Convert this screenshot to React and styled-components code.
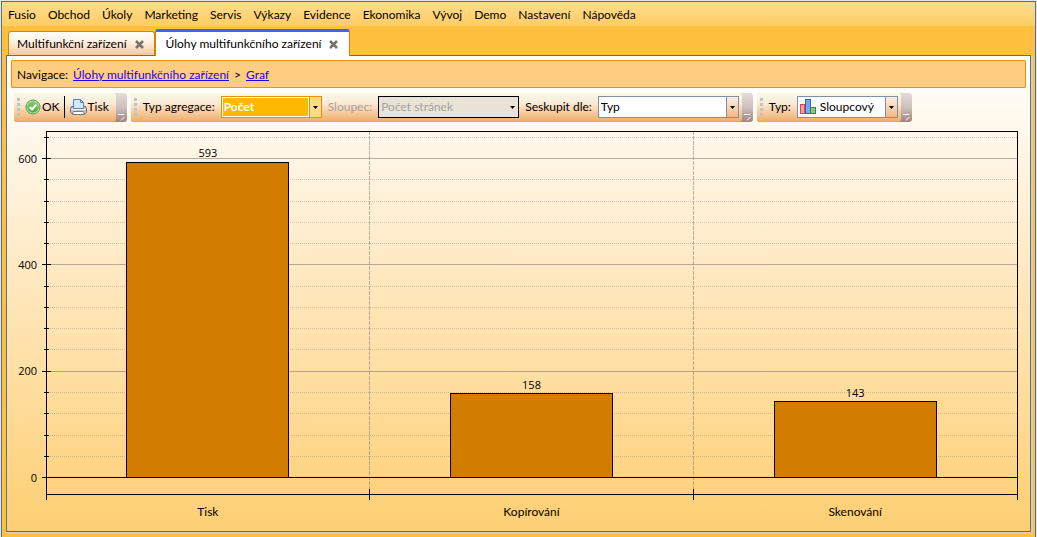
import { useState } from 'react';
import styled, { createGlobalStyle, css } from 'styled-components';

const MENU = [
  'Fusio',
  'Obchod',
  'Úkoly',
  'Marketing',
  'Servis',
  'Výkazy',
  'Evidence',
  'Ekonomika',
  'Vývoj',
  'Demo',
  'Nastavení',
  'Nápověda',
];

const TABS = [
  { id: 'devices', title: 'Multifunkční zařízení' },
  { id: 'jobs', title: 'Úlohy multifunkčního zařízení' },
];

const DATA = [
  { name: 'Tisk', value: 593 },
  { name: 'Kopírování', value: 158 },
  { name: 'Skenování', value: 143 },
];

const AXIS_MIN = -31;
const AXIS_MAX = 652;
const MAJOR = 200;
const MINOR = 40;

const toY = (value) => `${((AXIS_MAX - value) / (AXIS_MAX - AXIS_MIN)) * 100}%`;
const toX = (index) => `${(index / DATA.length) * 100}%`;

const ticks = [];
for (let v = 0; v <= AXIS_MAX; v += MINOR) {
  ticks.push({ value: v, major: v % MAJOR === 0 });
}

const GlobalStyle = createGlobalStyle`
  * {
    box-sizing: border-box;
  }
  body {
    margin: 0;
    background: #dfe8f2;
    color: #000;
    font: 12px/16px Lato, 'Open Sans', sans-serif;
  }
  button,
  select {
    font: inherit;
    color: inherit;
    margin: 0;
    padding: 0;
    border: 0;
    background: none;
  }
  svg {
    display: block;
    flex: none;
  }
`;

const Window = styled.div`
  display: flex;
  flex-direction: column;
  min-height: calc(100vh - 1px);
  margin: 1px 1px 0;
  padding-bottom: 5px;
  border: 1px solid #56708c;
  border-bottom: 0;
  background: #ffc040;
`;

const Menu = styled.nav`
  display: flex;
  gap: 12px;
  height: 24px;
  padding: 2px 6px 0;
  background: linear-gradient(#ffdb8f, #ffce62);
`;

const MenuItem = styled.button`
  height: 22px;
`;

const Tabs = styled.div`
  display: flex;
  align-items: flex-end;
  padding: 3px 6px 0;
`;

const Tab = styled.div`
  display: flex;
  align-items: center;
  gap: 8px;
  height: 24px;
  padding: 1px 10px 0 8px;
  border: 1px solid #d98200;
  border-bottom: 0;
  border-radius: 3px 3px 0 0;
  background: linear-gradient(#fffdf8, #fff3e6 40%, #fbc79a);
  ${({ $active }) =>
    $active &&
    css`
      z-index: 1;
      height: 27px;
      margin-bottom: -1px;
      padding: 0 11px 0 10px;
      border-top: 3px solid #2c6cf6;
      background: #fff;
    `}
`;

const TabTitle = styled.button`
  white-space: nowrap;
`;

const Close = styled.button`
  width: 9px;
  height: 9px;
`;

const Panel = styled.main`
  flex: 1;
  display: flex;
  flex-direction: column;
  margin: 0 4px;
  padding: 4px;
  border: 1px solid #56708c;
  box-shadow: 1px 1px 0 1px #d9cfae;
  background: linear-gradient(#fff, #fff6e6 20%, #ffe9c2 45%, #fecf73);
`;

const Breadcrumb = styled.div`
  display: flex;
  align-items: center;
  gap: 5px;
  height: 28px;
  padding: 1px 5px 0;
  border: 1px solid #f79000;
  border-radius: 1px;
  background: #ffcd80;
`;

const Crumb = styled.a`
  color: #1f00f0;
`;

const ToolRow = styled.div`
  display: flex;
  gap: 4px;
  padding: 5px 3px 0;
`;

const ToolBar = styled.div`
  display: flex;
  height: 29px;
  border-radius: 3px;
  overflow: hidden;
  background: linear-gradient(#e5dcd8, #cdbfbd 50%, #9c8583);
`;

const ToolBody = styled.div`
  display: flex;
  align-items: center;
  padding: 0 3px;
  border-bottom: 1px solid #dcae4c;
  border-radius: 3px;
  background: linear-gradient(#f3fbe8, #fdebd8 35%, #f8cfa6 65%, #eeb06c);
`;

const Grip = styled.span`
  width: 3px;
  height: 18px;
  background: repeating-linear-gradient(#bfc4c0 0 3px, transparent 3px 5px);
`;

const Overflow = styled.button`
  display: flex;
  align-items: flex-end;
  justify-content: center;
  width: 11px;
  padding: 0 0 1px 1px;
`;

const ToolButton = styled.button`
  display: flex;
  align-items: center;
  gap: 1px;
  padding: 0 4px 0 5px;
`;

const Separator = styled.span`
  width: 1px;
  height: 22px;
  background: #000;
`;

const Label = styled.label`
  padding: 0 6px;
  white-space: nowrap;
  color: ${({ $disabled }) => ($disabled ? '#a6a29e' : '#000')};
`;

const tones = {
  active: { border: '#dd9500', back: '#fdb900', text: '#fff', arrow: '#ffd98c' },
  disabled: { border: '#000', back: '#e9e2d8', text: '#a6a29e', arrow: 'transparent' },
  normal: { border: '#7f8fa6', back: '#fff', text: '#000', arrow: 'linear-gradient(#faf0e4, #f3b884)' },
};

const tone = (key) => (props) => tones[props.$tone][key];

const ComboBox = styled.div`
  display: flex;
  align-items: center;
  gap: 2px;
  width: ${({ $width }) => $width}px;
  height: 22px;
  padding-left: ${({ $icon }) => ($icon ? 2 : 0)}px;
  border: 1px solid ${tone('border')};
  background: ${tone('back')};
`;

const Select = styled.select`
  flex: 1;
  min-width: 0;
  height: 20px;
  margin-right: -2px;
  padding-left: ${({ $tone }) => ($tone === 'active' ? 1 : 2)}px;
  border: ${({ $tone }) => ($tone === 'active' ? '1px solid #fff' : 0)};
  appearance: none;
  outline: 0;
  color: ${tone('text')};
  font-weight: ${({ $tone }) => ($tone === 'active' ? 700 : 400)};
  opacity: 1;
`;

const Arrow = styled.span`
  display: flex;
  align-items: center;
  justify-content: center;
  width: 12px;
  height: 20px;
  border-left: 1px solid ${({ $tone }) => ($tone === 'disabled' ? 'transparent' : tones[$tone].border)};
  background: ${tone('arrow')};
  pointer-events: none;
`;

const ChartArea = styled.div`
  flex: 1;
  display: flex;
  min-height: 240px;
  padding: 9px 9px 33px 35px;
`;

const Plot = styled.svg`
  flex: 1;
  min-width: 0;
  overflow: visible;
`;

const Axis = styled.line`
  stroke: #000;
  shape-rendering: crispEdges;
`;

const GridLine = styled.line`
  stroke: #80706a;
  stroke-opacity: ${({ $major }) => ($major ? 0.55 : 0.35)};
  stroke-dasharray: ${({ $major }) => ($major ? 'none' : '1 1')};
  shape-rendering: crispEdges;
`;

const Divider = styled.line`
  stroke: #80706a;
  stroke-opacity: 0.5;
  stroke-dasharray: 4 1;
  shape-rendering: crispEdges;
`;

const Column = styled.rect`
  fill: #d27c00;
  stroke: #000;
  shape-rendering: crispEdges;
`;

const Frame = styled.rect`
  fill: none;
  stroke: #000;
  shape-rendering: crispEdges;
`;

const ChartText = styled.text`
  fill: #000;
`;

const ChartNumber = styled(ChartText)`
  font: 11px 'Open Sans', sans-serif;
`;

function CloseIcon() {
  return (
    <svg width="9" height="9" viewBox="0 0 9 9" aria-hidden="true">
      <path d="M1 1 8 8M8 1 1 8" stroke="#77736b" strokeWidth="2.6" />
    </svg>
  );
}

function OkIcon() {
  return (
    <svg width="16" height="16" viewBox="0 0 16 16" aria-hidden="true">
      <defs>
        <linearGradient id="okFill" x1="0" y1="0" x2="0" y2="1">
          <stop offset="0" stopColor="#86c974" />
          <stop offset="1" stopColor="#4cb03c" />
        </linearGradient>
      </defs>
      <circle cx="8" cy="8" r="7" fill="#cfe8c4" stroke="#4e9b43" />
      <circle cx="8" cy="8" r="5.8" fill="url(#okFill)" />
      <path d="M4.6 8 7 10.3 11.4 5.7" fill="none" stroke="#fff" strokeWidth="2" />
    </svg>
  );
}

function PrinterIcon() {
  return (
    <svg width="17" height="17" viewBox="0 0 17 17" aria-hidden="true">
      <path d="M1.5 7.5h14l1 2v4l-1 1h-14l-1-1v-4z" fill="#c6c7cc" stroke="#6b6d75" />
      <path d="M3.5 9.5V.5h7l3 3v6z" fill="#d3e8fc" stroke="#4a87c4" />
      <path d="M10.5.5v3h3z" fill="#fff" stroke="#4a87c4" />
      <path d="M1.5 10.5h14" stroke="#f6f6f8" />
      <path d="M3.5 12.5h10l1 3h-12z" fill="#fff" stroke="#77787e" />
    </svg>
  );
}

function BarsIcon() {
  return (
    <svg width="16" height="16" viewBox="0 0 16 16" aria-hidden="true">
      <rect x="0.5" y="5.5" width="4" height="9" fill="#ff9b9b" stroke="#e8414b" />
      <rect x="5.5" y="0.5" width="5" height="14" fill="#76a7f2" stroke="#2d62c4" />
      <rect x="10.5" y="8.5" width="5" height="6" fill="#8fc391" stroke="#3b8442" />
    </svg>
  );
}

function OverflowMark() {
  return (
    <svg width="7" height="7" viewBox="0 0 7 7" aria-hidden="true">
      <path d="M0 .5h6" stroke="#fff" />
      <path d="M0 3h6L3 6z" fill="#c58f94" />
      <path d="M3 6.5 6.5 3" stroke="#fff" />
    </svg>
  );
}

function Bar({ children }) {
  return (
    <ToolBar>
      <ToolBody>
        <Grip />
        {children}
      </ToolBody>
      <Overflow type="button" aria-label="Další">
        <OverflowMark />
      </Overflow>
    </ToolBar>
  );
}

function Combo({ id, width, tone = 'normal', icon, disabled, options }) {
  return (
    <ComboBox $width={width} $tone={tone} $icon={!!icon}>
      {icon}
      <Select id={id} disabled={disabled} $tone={tone}>
        {options.map((option) => (
          <option key={option}>{option}</option>
        ))}
      </Select>
      <Arrow $tone={tone}>
        <svg width="5" height="3" viewBox="0 0 5 3" aria-hidden="true">
          <path d="M0 0h5L2.5 3z" fill="#000" />
        </svg>
      </Arrow>
    </ComboBox>
  );
}

function Chart() {
  return (
    <ChartArea>
      <Plot role="img" aria-label="Graf">
        {ticks.map(({ value, major }) => (
          <g key={value}>
            <GridLine $major={major} x1="0" x2="100%" y1={toY(value)} y2={toY(value)} />
            <Axis x1={major ? -4 : -2} x2={major ? 5 : 3} y1={toY(value)} y2={toY(value)} />
            {major && (
              <ChartNumber x="-9" y={toY(value)} dy="4" textAnchor="end">
                {value}
              </ChartNumber>
            )}
          </g>
        ))}
        {DATA.slice(1).map((item, i) => (
          <Divider key={item.name} x1={toX(i + 1)} x2={toX(i + 1)} y1="0" y2="100%" />
        ))}
        {DATA.map((item, i) => (
          <g key={item.name}>
            <Column
              x={toX(i + 0.25)}
              y={toY(item.value)}
              width={toX(0.5)}
              height={`${(item.value / (AXIS_MAX - AXIS_MIN)) * 100}%`}
            />
            <ChartNumber x={toX(i + 0.5)} y={toY(item.value)} dy="-5" textAnchor="middle">
              {item.value}
            </ChartNumber>
            <ChartText x={toX(i + 0.5)} y="100%" dy="22" textAnchor="middle">
              {item.name}
            </ChartText>
          </g>
        ))}
        <Axis x1="0" x2="100%" y1={toY(0)} y2={toY(0)} />
        <Frame width="100%" height="100%" />
        {[...DATA, null].map((_, i) => (
          <svg key={i} x={toX(i)} y="100%" overflow="visible">
            <Axis x1="0" x2="0" y1="-5" y2="6" />
          </svg>
        ))}
      </Plot>
    </ChartArea>
  );
}

export default function App() {
  const [active, setActive] = useState('jobs');

  return (
    <>
      <GlobalStyle />
      <Window>
        <Menu>
          {MENU.map((item) => (
            <MenuItem key={item} type="button">
              {item}
            </MenuItem>
          ))}
        </Menu>
        <Tabs>
          {TABS.map(({ id, title }) => (
            <Tab key={id} $active={id === active}>
              <TabTitle type="button" onClick={() => setActive(id)}>
                {title}
              </TabTitle>
              <Close type="button" aria-label="Zavřít">
                <CloseIcon />
              </Close>
            </Tab>
          ))}
        </Tabs>
        <Panel>
          <Breadcrumb>
            <span>Navigace:</span>
            <Crumb href="#jobs">Úlohy multifunkčního zařízení</Crumb>
            <span>&gt;</span>
            <Crumb href="#chart">Graf</Crumb>
          </Breadcrumb>
          <ToolRow>
            <Bar>
              <ToolButton type="button">
                <OkIcon />
                OK
              </ToolButton>
              <Separator />
              <ToolButton type="button">
                <PrinterIcon />
                Tisk
              </ToolButton>
            </Bar>
            <Bar>
              <Label htmlFor="aggregation">Typ agregace:</Label>
              <Combo id="aggregation" width={101} tone="active" options={['Počet', 'Součet']} />
              <Label htmlFor="column" $disabled>
                Sloupec:
              </Label>
              <Combo id="column" width={141} tone="disabled" disabled options={['Počet stránek']} />
              <Label htmlFor="group">Seskupit dle:</Label>
              <Combo id="group" width={141} options={['Typ', 'Uživatel']} />
            </Bar>
            <Bar>
              <Label htmlFor="chartType">Typ:</Label>
              <Combo
                id="chartType"
                width={101}
                icon={<BarsIcon />}
                options={['Sloupcový', 'Koláčový']}
              />
            </Bar>
          </ToolRow>
          <Chart />
        </Panel>
      </Window>
    </>
  );
}
